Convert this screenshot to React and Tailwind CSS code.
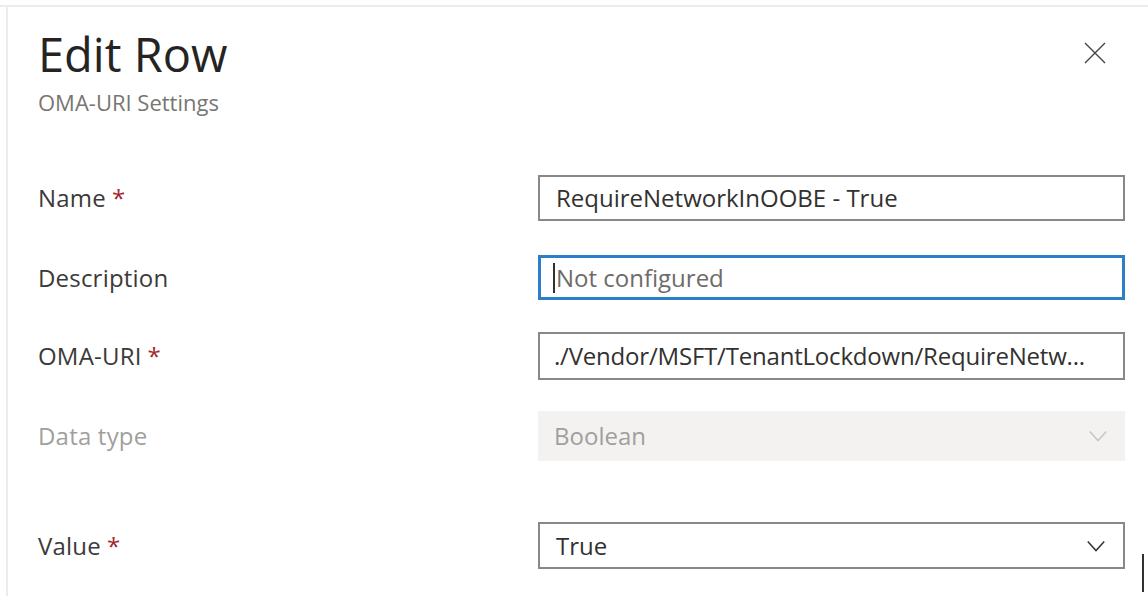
const FONT = "font-['Open_Sans','Noto_Sans',sans-serif]";

function Chevron({ className }) {
  return (
    <svg viewBox="0 0 24 24" className={className} fill="none" stroke="currentColor" strokeWidth="1.6">
      <path d="M3 7l9 10 9-10" />
    </svg>
  );
}

function Label({ text, required, disabled }) {
  return (
    <div className={`text-[24px] tracking-[0.2px] ${disabled ? "text-[#a19f9d]" : "text-[#3b3a39]"}`}>
      {text}
      {required && <span className="ml-[6px] text-[#a4262c]">*</span>}
    </div>
  );
}

export default function App() {
  return (
    <div className={`${FONT} h-[596px] w-[1148px] overflow-hidden bg-white`}>
      <div className="mt-[5px] h-[591px] border-t-2 border-[#ececec]">
        <div className="ml-[6px] h-full border-l-2 border-[#ececec] pl-[30px] pr-[21px]">
          <div className="flex items-start justify-between pt-[15px]">
            <div>
              <h1 className="text-[47px] leading-[64px] text-[#252423]">Edit Row</h1>
              <div className="mt-[1px] text-[22px] leading-[30px] text-[#787672]">OMA-URI Settings</div>
            </div>
            <button className="mr-[20px] mt-[19px] text-[#444]">
              <svg viewBox="0 0 24 24" className="h-[24px] w-[24px]" fill="none" stroke="currentColor" strokeWidth="1.4">
                <path d="M2 2l20 20M22 2L2 22" />
              </svg>
            </button>
          </div>

          <div className="mt-[58px] grid grid-cols-[500px_587px] items-center">
            <Label text="Name" required />
            <div className="flex h-[46px] items-center border-2 border-[#8a8886] px-[16px] text-[24px] text-[#323130]">
              RequireNetworkInOOBE - True
            </div>

            <div className="mt-[34px]">
              <Label text="Description" />
            </div>
            <div className="mt-[34px] flex h-[45px] items-center border-[3px] border-[#2b7fc9] pl-[12px] text-[24px] text-[#6d6b69]">
              <span className="mr-[1px] h-[30px] w-[2px] bg-[#323130]" />
              Not configured
            </div>

            <div className="mt-[32px]">
              <Label text="OMA-URI" required />
            </div>
            <div className="mt-[32px] flex h-[48px] items-center border-2 border-[#8a8886] pl-[14px] pr-[8px] text-[24px] text-[#323130]">
              <span className="truncate tracking-[-0.2px]">./Vendor/MSFT/TenantLockdown/RequireNetw...</span>
            </div>

            <div className="mt-[31px]">
              <Label text="Data type" disabled />
            </div>
            <div className="mt-[31px] flex h-[50px] items-center justify-between bg-[#f3f2f1] px-[16px] text-[24px] text-[#a19f9d]">
              Boolean
              <Chevron className="h-[22px] w-[22px] text-[#c8c6c4]" />
            </div>

            <div className="mt-[61px]">
              <Label text="Value" required />
            </div>
            <div className="relative mt-[61px] flex h-[47px] items-center justify-between border-2 border-[#8a8886] px-[16px] text-[24px] text-[#323130]">
              True
              <Chevron className="h-[22px] w-[22px] text-[#323130]" />
              <span className="absolute left-[602px] top-[30px] h-[38px] w-[2px] bg-[#323130]" />
            </div>
          </div>
        </div>
      </div>
    </div>
  );
}
